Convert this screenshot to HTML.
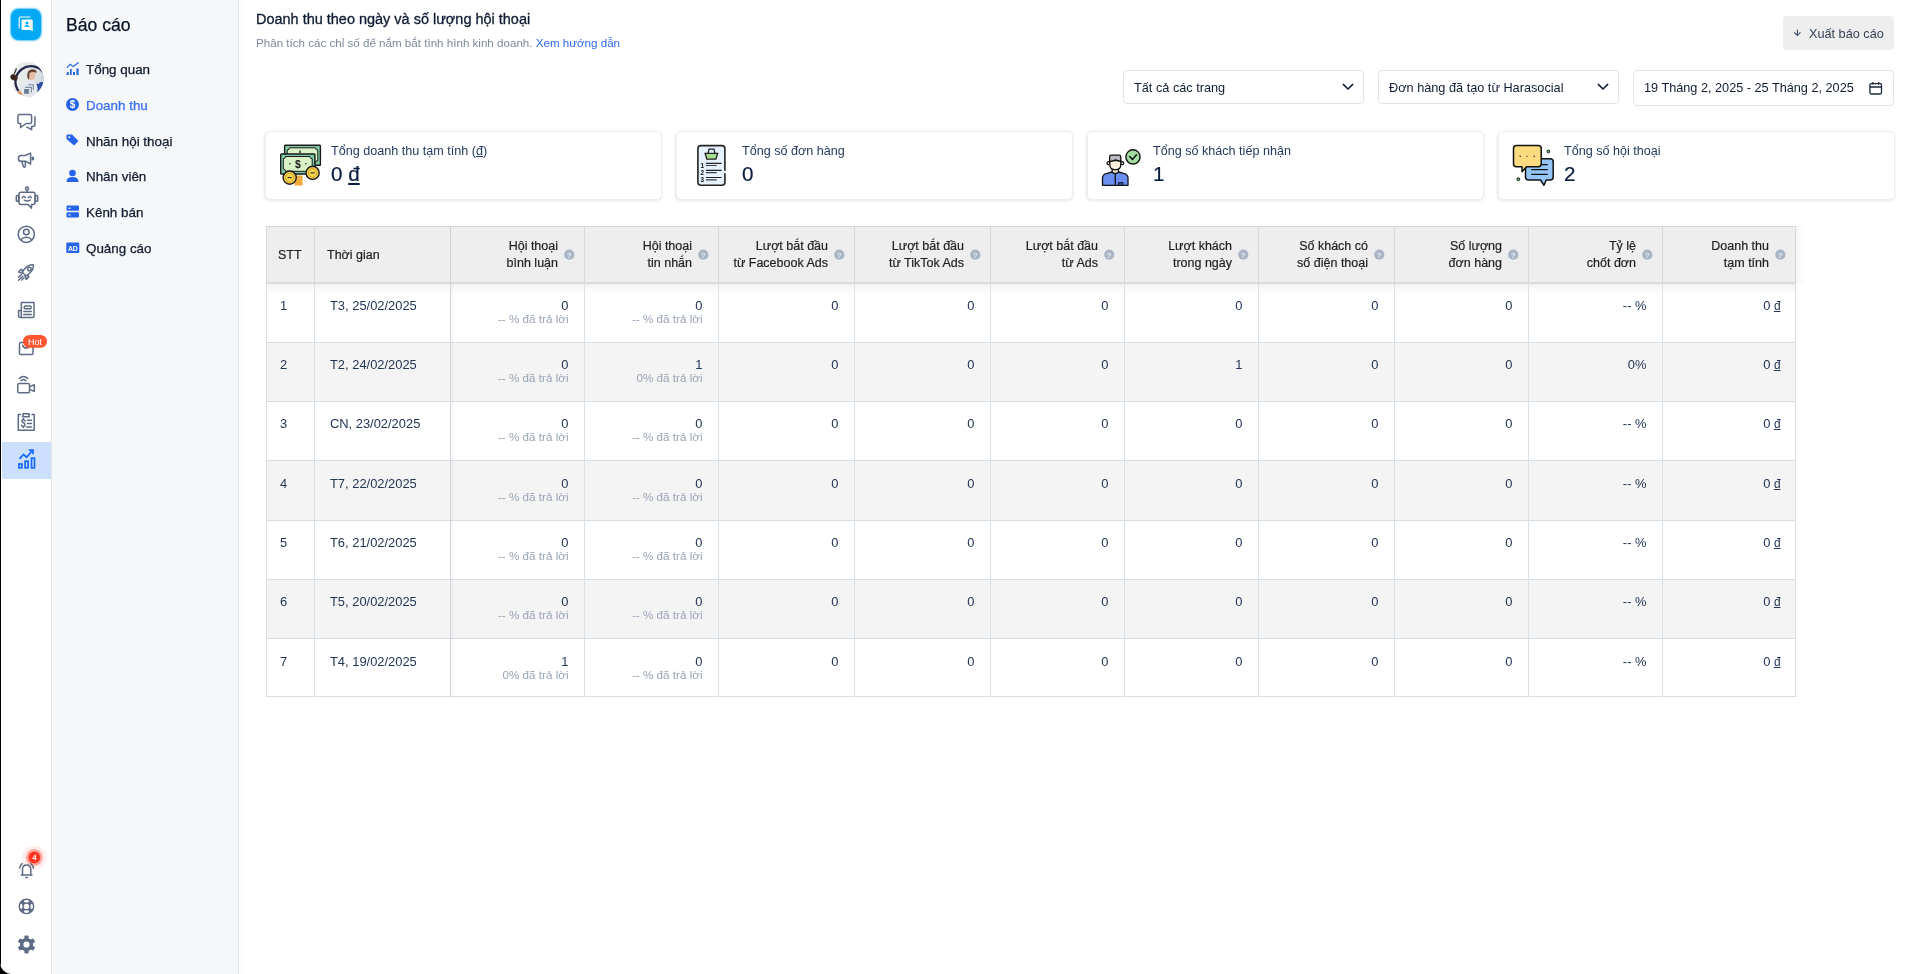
<!DOCTYPE html>
<html lang="vi">
<head>
<meta charset="utf-8">
<style>
*{box-sizing:border-box;margin:0;padding:0}
html,body{width:1920px;height:974px;overflow:hidden;background:#000;font-family:"Liberation Sans",sans-serif;color:#1e293b}
#iconbar{will-change:transform;position:absolute;left:0;top:0;width:52px;height:974px;background:#fff;border-right:1px solid #e3e7ec;border-bottom-left-radius:12px;overflow:hidden}
#sub{will-change:transform;position:absolute;left:52px;top:0;width:187px;height:974px;background:#f5f7f9;border-right:1px solid #e3e8ed}
#main{will-change:transform;position:absolute;left:239px;top:0;width:1681px;height:974px;background:#fff}
.abs{position:absolute}
.mi{font-size:13.4px;line-height:16px;white-space:nowrap;-webkit-text-stroke:0.25px currentColor}
.th{font-size:12.5px;line-height:17px;color:#1f1f1f;white-space:nowrap;-webkit-text-stroke:0.2px currentColor}
.td{font-size:12.9px;line-height:16px;color:#233554;white-space:nowrap}
.sub{font-size:11.68px;line-height:14px;color:#9aa4b5;white-space:nowrap}
.card{background:#fff;border:1px solid #eceef1;border-radius:5px;box-shadow:-0.5px 1px 2.5px rgba(20,40,80,0.10)}
.dong{font-size:0.92em;text-decoration:underline;text-decoration-thickness:1px;text-underline-offset:1px;margin-right:-1px}
.dong2{text-decoration:underline;text-decoration-thickness:1px;text-underline-offset:1px}
.md{-webkit-text-stroke:0.2px currentColor}
.dong3{text-decoration:underline;text-decoration-thickness:1.5px;text-underline-offset:2px}
</style>
</head>
<body>
<div id="iconbar"><div class="abs" style="left:0;top:0;width:1px;height:974px;background:#000"></div>
<div class="abs" style="left:11px;top:9px;width:30px;height:30.5px;border-radius:8px;background:#03a9f4;box-shadow:0 0 1.5px 0.5px rgba(3,169,244,0.6)"></div>
<svg class="abs" style="left:9px;top:8px" width="32" height="32" viewBox="0 0 32 32">
<path d="M10.2 20.5 V10.5 Q10.2 9 11.7 9 H21.4" fill="none" stroke="#fff" stroke-width="1.1"/>
<path d="M12.5 12.6 Q12.5 11.4 13.7 11.4 H22.5 Q23.7 11.4 23.7 12.6 V23.3 L21.5 21.9 H13.7 Q12.5 21.9 12.5 20.7 Z" fill="#fff"/>
<circle cx="18" cy="14.9" r="1.5" fill="#03a9f4"/>
<path d="M15.4 19 Q15.6 17 18 17 Q20.4 17 20.6 19 Z" fill="#03a9f4"/>
</svg>
<svg class="abs" style="left:9px;top:62px" width="36" height="36" viewBox="0 0 36 36">
<defs><clipPath id="av"><circle cx="17.6" cy="16.9" r="17"/></clipPath>
<filter id="avb" x="-10%" y="-10%" width="120%" height="120%"><feGaussianBlur stdDeviation="0.45"/></filter>
<linearGradient id="avg" x1="0" y1="0" x2="1" y2="0"><stop offset="0" stop-color="#eef2ef"/><stop offset="0.55" stop-color="#e4eae8"/><stop offset="1" stop-color="#cfd7da"/></linearGradient></defs>
<g clip-path="url(#av)"><g filter="url(#avb)">
<rect x="-2" y="-2" width="40" height="40" fill="url(#avg)"/>
<path d="M3 -2 V38" stroke="#f7f9f7" stroke-width="3"/>
<path d="M9.5 29 A13.3 13.3 0 0 1 34.5 10.5" fill="none" stroke="#27264f" stroke-width="2.2"/>
<path d="M34.5 10.5 Q36.5 15 35.5 21" fill="none" stroke="#27264f" stroke-width="2"/>
<path d="M7.5 6.5 L5 12.5" stroke="#3a2b28" stroke-width="1.2"/>
<ellipse cx="5" cy="15.5" rx="3.8" ry="2.9" fill="#3b2824" transform="rotate(30 5 15.5)"/>
<ellipse cx="22.6" cy="13.2" rx="4" ry="5" fill="#e6bea8"/>
<path d="M18.3 15.5 Q17.5 7.5 23 7.2 Q28.5 7.2 27.5 11 Q24 9 20.5 11 L20 18 Z" fill="#6b4634"/>
<path d="M26 21 Q30 19.5 37 20 V38 H28 Z" fill="#2e4ea6"/><path d="M24 20.5 Q27 19 31 19.6 L30 22 Q27 21.5 25.5 22.5 Z" fill="#d9dde8"/>

<path d="M6 38 L9 30 Q12 27 15 29 L14 38 Z" fill="#d8955e"/>
<path d="M15.5 19.5 Q18.5 18 20.5 20.5 L18 23.5 Z" fill="#ecc7b2"/>
</g></g>
<circle cx="20" cy="26.7" r="8.7" fill="#e5e9ee"/>
<rect x="15.1" y="27" width="4.8" height="4.8" fill="#6d7b93"/>
<path d="M16.2 25.4 H22.4 V30.5" fill="none" stroke="#7d8aa0" stroke-width="1.1"/>
<path d="M19 22.8 H24.3 V27.9" fill="none" stroke="#7d8aa0" stroke-width="1.1"/>
</svg>
<svg class="abs" style="left:14px;top:110px" width="24" height="24" viewBox="0 0 24 24" fill="none" stroke="#5d6b85" stroke-width="1.5" stroke-linecap="round" stroke-linejoin="round">
<path d="M3.9 6.2 Q3.9 4.6 5.5 4.6 H16 Q17.6 4.6 17.6 6.2 V11.9 Q17.6 13.5 16 13.5 H12.3 L6.6 17.3 V13.5 H5.5 Q3.9 13.5 3.9 11.9 Z" stroke-linejoin="miter" stroke-linecap="butt"/>
<path d="M20.9 6.2 V14.6 Q20.9 16.6 18.9 16.6 H17.6 V19.5 L12.3 16.8" stroke-linejoin="miter" stroke-linecap="butt"/>
</svg>
<svg class="abs" style="left:14px;top:148px" width="24" height="24" viewBox="0 0 24 24" fill="none" stroke="#5d6b85" stroke-width="1.5" stroke-linecap="round" stroke-linejoin="round">
<path d="M7.3 7.5 H11.3 L16.6 5.1 V16 L11.8 13.3 H7.3 A2.9 2.9 0 0 1 7.3 7.5 Z"/>
<path d="M7.8 13.6 L9.4 18.6 Q10.3 20 11.4 18.6 L11.3 13.6"/>
<path d="M18.3 9.3 A1.2 1.2 0 0 1 18.3 11.7 Z" fill="#5d6b85"/>
</svg>
<svg class="abs" style="left:10px;top:181px" width="32" height="32" viewBox="0 0 32 32" fill="none" stroke="#5d6b85" stroke-width="1.5" stroke-linecap="round" stroke-linejoin="round">
<path d="M11 11.3 H23 Q25 11.3 25 13.3 V21.5 Q25 23.5 23 23.5 H21.5 V27.2 L18 23.5 H11 Q9 23.5 9 21.5 V13.3 Q9 11.3 11 11.3 Z"/>
<circle cx="17" cy="7.4" r="1.5"/>
<path d="M17 9 V11.3"/>
<rect x="6.3" y="14.4" width="2.3" height="5.9" rx="0.9"/>
<rect x="25.4" y="14.4" width="2.3" height="5.9" rx="0.9"/>
<path d="M12.3 16.6 Q13.8 14.2 15.3 16.6"/>
<path d="M18.3 16.6 Q19.8 14.2 21.3 16.6"/>
<path d="M14.3 19.2 Q17.3 21 20.3 19.2"/>
</svg>
<svg class="abs" style="left:10px;top:218px" width="32" height="32" viewBox="0 0 32 32" fill="none" stroke="#5d6b85" stroke-width="1.5" stroke-linecap="round" stroke-linejoin="round">
<circle cx="16.3" cy="16.3" r="8.1"/>
<circle cx="16.3" cy="14" r="2.8"/>
<path d="M10.8 21.8 Q13 19.2 16.3 19.2 Q19.6 19.2 21.8 21.8"/>
</svg>
<svg class="abs" style="left:10px;top:256px" width="32" height="32" viewBox="0 0 32 32" fill="none" stroke="#5d6b85" stroke-width="1.5" stroke-linecap="round" stroke-linejoin="round">
<path d="M23.4 8.9 Q18.5 8.5 15 12.5 L12 16 L16.2 20.2 L19.6 17.2 Q23.8 13.6 23.4 8.9 Z"/>
<circle cx="19.4" cy="13" r="1.8"/>
<path d="M13.3 14.6 L11.2 13.4 L8.6 16 L12.3 17.1"/>
<path d="M17.6 18.8 L18.9 20.9 L16.3 23.5 L15.1 19.8"/>
<path d="M11.3 18.6 L8.5 21.2"/><path d="M12.7 20.2 L8.6 24.3"/><path d="M14 21.8 L11.8 24"/>
</svg>
<svg class="abs" style="left:10px;top:294px" width="32" height="32" viewBox="0 0 32 32" fill="none" stroke="#5d6b85" stroke-width="1.5" stroke-linecap="round" stroke-linejoin="round">
<path d="M11.3 23.6 V8.5 H24 V22 Q24 23.6 22.4 23.6 H10.3 Q8.6 23.6 8.6 22 V16.4 H11"/>
<rect x="14.2" y="11.9" width="6.9" height="2.8" rx="0.9"/>
<path d="M13.8 17.5 H21.3"/><path d="M13.8 20.4 H21.3"/>
</svg>
<svg class="abs" style="left:10px;top:330px" width="40" height="32" viewBox="0 0 40 32" fill="none" stroke="#5d6b85" stroke-width="1.5" stroke-linecap="round" stroke-linejoin="round">
<rect x="9.5" y="12.6" width="13.5" height="11.9" rx="1.3"/>
<path d="M12.7 15.2 Q13.5 18 16.3 18 Q19 18 19.8 15.2"/>
<rect x="13" y="5" width="24" height="12.8" rx="6.4" fill="#ff5530" stroke="none"/>
</svg>
<div class="abs" style="left:23px;top:336px;width:24px;height:13px;font-size:9px;line-height:13px;color:#fff;text-align:center">Hot</div>
<svg class="abs" style="left:10px;top:369px" width="32" height="32" viewBox="0 0 32 32" fill="none" stroke="#5d6b85" stroke-width="1.5" stroke-linecap="round" stroke-linejoin="round">
<rect x="7.8" y="14.5" width="11.7" height="9.3" rx="1.3"/>
<path d="M19.8 17.6 L24.3 15.8 V22.4 L19.8 20.6"/>
<path d="M9.3 9.4 Q13.5 5.5 17.7 9.4"/>
<path d="M11.1 11.6 Q13.5 9.3 15.9 11.6"/>
</svg>
<svg class="abs" style="left:10px;top:406px" width="32" height="32" viewBox="0 0 32 32" fill="none" stroke="#5d6b85" stroke-width="1.5" stroke-linecap="round" stroke-linejoin="round">
<path d="M10.4 8.6 H8.3 V24.3 H24.2 V8.6 H22"/>
<rect x="12.2" y="7.1" width="7.6" height="4.4" rx="0.6" fill="#5d6b85" stroke="none"/>
<rect x="13.7" y="8.6" width="4.6" height="1.5" rx="0.75" fill="#fff" stroke="none"/>
<path d="M15.1 15 Q14.6 13.7 13.3 13.7 Q11.9 13.7 11.9 15 Q11.9 16.3 13.3 16.8 Q15 17.4 15 18.9 Q15 20.4 13.3 20.4 Q11.9 20.4 11.5 19.2"/>
<path d="M13.3 12.6 V13.7"/><path d="M13.3 20.4 V21.6"/>
<path d="M17.5 14.3 H21.5"/><path d="M17.5 17.6 H21.5"/><path d="M16.6 21 H21.5"/>
</svg>
<div class="abs" style="left:2px;top:442px;width:49px;height:37px;background:#cce0fd"></div>
<svg class="abs" style="left:10px;top:444px" width="32" height="32" viewBox="0 0 32 32" fill="none" stroke="#1769ff" stroke-width="1.7" stroke-linecap="butt" stroke-linejoin="miter">
<rect x="8.9" y="20" width="3" height="3.8"/>
<rect x="15.1" y="17.2" width="3" height="6.6"/>
<rect x="21.5" y="14.2" width="3" height="9.6"/>
<path d="M9.5 14.8 L13.5 10.5 L16.6 13.2 L22.3 6.6"/>
<path d="M18.8 6.1 H23 V10.2"/>
</svg>
<svg class="abs" style="left:10px;top:846px" width="36" height="36" viewBox="0 0 36 36" fill="none" stroke="#5d6b85" stroke-width="1.5" stroke-linecap="round" stroke-linejoin="round">
<circle cx="24.3" cy="11.5" r="12" fill="#ffe9e6" stroke="none" opacity="0.8"/>
<circle cx="24.3" cy="11.5" r="8.4" fill="#ffaaa0" stroke="none"/>
<circle cx="24.3" cy="11.5" r="5.9" fill="#ff3522" stroke="none"/>
<path d="M12.5 28.9 V23.5 Q12.5 19 16.6 19 Q20.8 19 20.8 23.5 V28.9"/>
<path d="M11.3 28.9 H22"/>
<path d="M15.9 31.4 H17.3"/>
<path d="M9.6 22 Q10.2 19.2 12.2 17.6"/><path d="M23.5 22 Q22.9 19.2 20.9 17.6"/>
</svg>
<div class="abs" style="left:28px;top:851px;width:13px;height:13px;font-size:8px;font-weight:bold;line-height:13px;color:#fff;text-align:center">4</div>
<svg class="abs" style="left:16px;top:896px" width="21" height="21" viewBox="0 0 21 21">
<circle cx="10.45" cy="10.45" r="7.9" fill="#5d6b85"/>
<circle cx="10.45" cy="10.45" r="2.65" fill="#fff"/>
<g fill="#fff"><ellipse cx="10.45" cy="5.3" rx="2.6" ry="1.3"/><ellipse cx="10.45" cy="15.6" rx="2.6" ry="1.3"/><ellipse cx="5.25" cy="10.45" rx="1.25" ry="2.6"/><ellipse cx="15.65" cy="10.45" rx="1.25" ry="2.6"/></g></svg>
<svg class="abs" style="left:16px;top:933.5px" width="21" height="21" viewBox="0 0 21 21">
<g fill="#5d6b85"><rect x="8.4" y="1.6" width="4.2" height="5" rx="0.9" transform="rotate(0 10.5 10.5)"/><rect x="8.4" y="1.6" width="4.2" height="5" rx="0.9" transform="rotate(60 10.5 10.5)"/><rect x="8.4" y="1.6" width="4.2" height="5" rx="0.9" transform="rotate(120 10.5 10.5)"/><rect x="8.4" y="1.6" width="4.2" height="5" rx="0.9" transform="rotate(180 10.5 10.5)"/><rect x="8.4" y="1.6" width="4.2" height="5" rx="0.9" transform="rotate(240 10.5 10.5)"/><rect x="8.4" y="1.6" width="4.2" height="5" rx="0.9" transform="rotate(300 10.5 10.5)"/><circle cx="10.5" cy="10.5" r="6.6"/></g>
<circle cx="10.5" cy="10.5" r="3.1" fill="#fff"/>
</svg>
</div>
<div id="sub">
<div class="abs" style="left:14px;top:13px;font-size:17.6px;color:#0b1428;line-height:24px;white-space:nowrap;-webkit-text-stroke:0.25px currentColor">Báo cáo</div>
<svg class="abs" style="left:14px;top:62px" width="14" height="14" viewBox="0 0 14 14"><path d="M0.8 5.8 L4.2 2.2 L7.2 4.6 L12.6 0.6" fill="none" stroke="#2563eb" stroke-width="1.2"/><rect x="0.6" y="10.2" width="2.2" height="2.8" fill="#2563eb"/><rect x="4" y="7" width="1.7" height="6" fill="#2563eb"/><rect x="7" y="10" width="2" height="3" fill="#2563eb"/><rect x="10.4" y="6.5" width="2.2" height="6.5" fill="#2563eb"/></svg>
<div class="abs mi" style="left:34px;top:62px;color:#111a2e">Tổng quan</div>
<svg class="abs" style="left:14px;top:98px" width="14" height="14" viewBox="0 0 14 14"><circle cx="6.5" cy="6.5" r="6.5" fill="#2563eb"/><text x="6.5" y="10.2" font-size="10" font-weight="bold" text-anchor="middle" fill="#fff" font-family="Liberation Sans">$</text></svg>
<div class="abs mi" style="left:34px;top:98px;color:#3b6ef5">Doanh thu</div>
<svg class="abs" style="left:14px;top:134px" width="14" height="14" viewBox="0 0 14 14"><path d="M0.5 1.5 Q0.5 0.5 1.5 0.5 H6 L12.5 7 L8 11.5 L0.5 5 Z" fill="#2563eb"/><circle cx="3.3" cy="3.3" r="1" fill="#f5f7f9"/></svg>
<div class="abs mi" style="left:34px;top:134px;color:#111a2e">Nhãn hội thoại</div>
<svg class="abs" style="left:14px;top:169px" width="14" height="14" viewBox="0 0 14 14"><circle cx="6.5" cy="4" r="3.3" fill="#2563eb"/><path d="M0.5 13 Q0.5 8 6.5 8 Q12.5 8 12.5 13 Z" fill="#2563eb"/></svg>
<div class="abs mi" style="left:34px;top:169px;color:#111a2e">Nhân viên</div>
<svg class="abs" style="left:14px;top:205px" width="14" height="14" viewBox="0 0 14 14"><rect x="0.5" y="0.5" width="12.5" height="5.3" rx="1.2" fill="#2563eb"/><rect x="0.5" y="7.2" width="12.5" height="5.3" rx="1.2" fill="#2563eb"/><rect x="2.5" y="2.6" width="2" height="1.2" fill="#fff"/><rect x="2.5" y="9.3" width="2" height="1.2" fill="#fff"/></svg>
<div class="abs mi" style="left:34px;top:205px;color:#111a2e">Kênh bán</div>
<svg class="abs" style="left:14px;top:241px" width="14" height="14" viewBox="0 0 14 14"><rect x="0.3" y="1.5" width="13" height="10.5" rx="1.2" fill="#2563eb"/><text x="6.8" y="9.6" font-size="6.8" font-weight="bold" text-anchor="middle" fill="#fff" font-family="Liberation Sans">AD</text></svg>
<div class="abs mi" style="left:34px;top:241px;color:#111a2e">Quảng cáo</div>
</div>
<div id="main">
<div class="abs" style="left:0;top:0;width:7px;height:974px;background:linear-gradient(90deg,rgba(30,50,80,0.018),rgba(30,50,80,0))"></div>
<div class="abs" style="left:17px;top:10px;font-size:14.48px;line-height:18px;color:#0f1b33;-webkit-text-stroke:0.3px currentColor;white-space:nowrap">Doanh thu theo ngày và số lượng hội thoại</div>
<div class="abs" style="left:17px;top:36px;font-size:11.6px;line-height:14px;color:#7d889c;white-space:nowrap">Phân tích các chỉ số để nắm bắt tình hình kinh doanh. <span style="color:#2d68f5">Xem hướng dẫn</span></div>
<div class="abs" style="left:1544px;top:16px;width:111px;height:34px;background:#eeeeee;border-radius:4px"></div>
<svg class="abs" style="left:1554px;top:28px" width="9" height="10" viewBox="0 0 9 10"><path d="M4.4 2 V7.3 M1.4 4.6 L4.4 7.5 L7.1 4.6" fill="none" stroke="#3d4d70" stroke-width="1.1" stroke-linecap="round" stroke-linejoin="round"/></svg>
<div class="abs" style="left:1570px;top:27px;font-size:12.7px;line-height:14px;color:#334155;white-space:nowrap">Xuất báo cáo</div>
<div class="abs" style="left:884px;top:70px;width:241px;height:34px;border:1px solid #dfe4ea;border-radius:4px;background:#fff"></div>
<div class="abs" style="left:895px;top:80px;font-size:12.73px;line-height:15px;color:#111c33;white-space:nowrap">Tất cả các trang</div>
<svg class="abs" style="left:1102px;top:82px" width="14" height="10" viewBox="0 0 14 10"><path d="M2.3 2.4 L7 7 L11.7 2.4" fill="none" stroke="#0f1b33" stroke-width="1.5" stroke-linecap="round" stroke-linejoin="round"/></svg>
<div class="abs" style="left:1139px;top:70px;width:241px;height:34px;border:1px solid #dfe4ea;border-radius:4px;background:#fff"></div>
<div class="abs" style="left:1150px;top:80px;font-size:12.73px;line-height:15px;color:#111c33;white-space:nowrap">Đơn hàng đã tạo từ Harasocial</div>
<svg class="abs" style="left:1357px;top:82px" width="14" height="10" viewBox="0 0 14 10"><path d="M2.3 2.4 L7 7 L11.7 2.4" fill="none" stroke="#0f1b33" stroke-width="1.5" stroke-linecap="round" stroke-linejoin="round"/></svg>
<div class="abs" style="left:1394px;top:70px;width:261px;height:36px;border:1px solid #dfe4ea;border-radius:4px;background:#fff"></div>
<div class="abs" style="left:1405px;top:81px;font-size:12.7px;line-height:15px;color:#111c33;white-space:nowrap">19 Tháng 2, 2025 - 25 Tháng 2, 2025</div>
<svg class="abs" style="left:1629px;top:81px" width="15" height="15" viewBox="0 0 15 15"><rect x="1.9" y="2.6" width="11.6" height="10.4" rx="1.4" fill="none" stroke="#1e293b" stroke-width="1.3"/><path d="M1.9 6 H13.5 M4.8 1 V3.6 M10.6 1 V3.6" stroke="#1e293b" stroke-width="1.3"/></svg>
<div class="abs card" style="left:26px;top:131px;width:397px;height:69px"></div>
<div class="abs" style="left:92px;top:143.5px;font-size:12.6px;line-height:15px;color:#243a5e;white-space:nowrap">Tổng doanh thu tạm tính (<span class=dong2>đ</span>)</div>
<div class="abs" style="left:92px;top:161.5px;font-size:20.6px;line-height:24px;color:#0a1d40;-webkit-text-stroke:0.2px currentColor;white-space:nowrap">0 <span class=dong3>đ</span></div>
<div class="abs card" style="left:437px;top:131px;width:397px;height:69px"></div>
<div class="abs" style="left:503px;top:143.5px;font-size:12.6px;line-height:15px;color:#243a5e;white-space:nowrap">Tổng số đơn hàng</div>
<div class="abs" style="left:503px;top:161.5px;font-size:20.6px;line-height:24px;color:#0a1d40;-webkit-text-stroke:0.2px currentColor;white-space:nowrap">0</div>
<div class="abs card" style="left:848px;top:131px;width:397px;height:69px"></div>
<div class="abs" style="left:914px;top:143.5px;font-size:12.6px;line-height:15px;color:#243a5e;white-space:nowrap">Tổng số khách tiếp nhận</div>
<div class="abs" style="left:914px;top:161.5px;font-size:20.6px;line-height:24px;color:#0a1d40;-webkit-text-stroke:0.2px currentColor;white-space:nowrap">1</div>
<div class="abs card" style="left:1259px;top:131px;width:397px;height:69px"></div>
<div class="abs" style="left:1325px;top:143.5px;font-size:12.6px;line-height:15px;color:#243a5e;white-space:nowrap">Tổng số hội thoại</div>
<div class="abs" style="left:1325px;top:161.5px;font-size:20.6px;line-height:24px;color:#0a1d40;-webkit-text-stroke:0.2px currentColor;white-space:nowrap">2</div>
<svg class="abs" style="left:40px;top:144px" width="44" height="44" viewBox="0 0 44 44" stroke="#1a1a1a" stroke-width="1.4" stroke-linejoin="round">
<rect x="5.6" y="1.3" width="35.8" height="20" rx="0.8" fill="#7fc9a7"/>
<path d="M10.5 3.8 H36.5 Q36.5 6 38.8 6 V16.5 Q36.5 16.5 36.5 18.8 H10.5 Q10.5 16.5 8.2 16.5 V6 Q10.5 6 10.5 3.8 Z" fill="#d9f2c6" stroke-width="1"/>
<path d="M21 6.5 V9" stroke-width="1.3"/>
<rect x="1.7" y="10" width="34.2" height="20" rx="0.8" fill="#7fc9a7"/>
<path d="M6.6 12.5 H30.9 Q30.9 14.7 33.2 14.7 V25 Q30.9 25 30.9 27.3 H6.6 Q6.6 25 4.3 25 V14.7 Q6.6 14.7 6.6 12.5 Z" fill="#d9f2c6" stroke-width="1"/>
<text x="18.8" y="23.6" font-size="10.5" font-weight="bold" text-anchor="middle" fill="#1a1a1a" stroke="none" font-family="Liberation Sans">$</text>
<path d="M10 19.8 H11.6 M26 19.8 H27.6" stroke-width="1.1"/>
<rect x="15.5" y="38" width="8.2" height="3.4" rx="1" fill="#f0a93a" stroke="none"/>
<rect x="15.5" y="34.6" width="8.2" height="3.4" rx="1" fill="#f0a93a" stroke="none"/>
<rect x="15.5" y="31.6" width="8.2" height="3" rx="1" fill="#f0a93a" stroke="none"/>
<circle cx="10.7" cy="33.6" r="6.6" fill="#f7d452"/>
<circle cx="10.7" cy="33.6" r="4.3" fill="#f7d452" stroke="#c79a1e" stroke-width="0.9"/>
<path d="M8.6 33.6 H12.8" stroke-width="1"/>
<circle cx="33.6" cy="28.9" r="6.6" fill="#f7d452"/>
<circle cx="33.6" cy="28.9" r="4.3" fill="#f7d452" stroke="#c79a1e" stroke-width="0.9"/>
<path d="M31.5 28.9 H35.7" stroke-width="1"/>
</svg>
<svg class="abs" style="left:457px;top:144px" width="32" height="44" viewBox="0 0 32 44" stroke="#222" stroke-width="1.6">
<rect x="1.9" y="1.6" width="27" height="39.6" rx="3" fill="#e6f2fd"/>
<path d="M28.9 26.8 V29.2" stroke="#e6f2fd" stroke-width="2"/>
<path d="M10.9 15.2 L9.1 9.3 H21.7 L19.9 15.2 Z" fill="#a6e08f" stroke-width="1.3"/>
<path d="M12 9.3 L13 5.2 H18 L19 9.3" fill="none" stroke-width="1.3"/>
<path d="M9.9 19.4 H25.6 M9.9 26.3 H25.6 M9.9 33.5 H25.6" stroke-width="1.2"/>
<path d="M9.9 21.5 H20.7 M9.9 28.6 H20.7 M9.9 35.8 H20.7" stroke-width="1.2" stroke="#3b3f45"/>
<text x="6.4" y="23.6" font-size="6.4" font-weight="bold" text-anchor="middle" fill="#111" stroke="none" font-family="Liberation Sans">1</text>
<text x="6.4" y="30.7" font-size="6.4" font-weight="bold" text-anchor="middle" fill="#111" stroke="none" font-family="Liberation Sans">2</text>
<text x="6.4" y="37.8" font-size="6.4" font-weight="bold" text-anchor="middle" fill="#111" stroke="none" font-family="Liberation Sans">3</text>
</svg>
<svg class="abs" style="left:856px;top:140px" width="50" height="50" viewBox="0 0 50 50" stroke="#111" stroke-width="1.3" stroke-linejoin="round">
<path d="M7.5 45.3 V38 Q7.5 34.5 12 33.4 L17 32 L20.3 33.2 L23.6 32 L28.6 33.4 Q33 34.5 33 38 V45.3 Z" fill="#6a8ff0"/>
<path d="M20.3 33.5 V45.3"/>
<rect x="23.5" y="42.6" width="4.5" height="2.7" fill="#2f55b8" stroke-width="0.9"/>
<path d="M17.2 28.8 V32.6 Q20.3 34 23.4 32.6 V28.8" fill="#fbefdc"/>
<circle cx="13.5" cy="23.2" r="1.5" fill="#fbefdc"/><circle cx="27.2" cy="23.2" r="1.5" fill="#fbefdc"/>
<path d="M14.8 20.5 V24.5 Q14.8 29.8 20.3 29.8 Q25.8 29.8 25.8 24.5 V20.5 Z" fill="#fcf0df"/>
<path d="M14.6 21.5 V17 Q14.6 15.2 16.4 15.2 H24 Q25.8 15.2 25.8 17 V21.3 Q23 20.8 20.3 19.8 L19.3 20.3 Q17 21 14.6 21.5 Z" fill="#b8babf"/>
<circle cx="38" cy="16.9" r="7.1" fill="#a3dca0" stroke-width="1.4"/>
<path d="M34.6 16.5 L37.5 19.4 L41.5 14.8" fill="none" stroke-width="1.5" stroke-linecap="round"/>
</svg>
<svg class="abs" style="left:1271px;top:143px" width="46" height="46" viewBox="0 0 46 46" stroke="#111" stroke-width="1.5" stroke-linejoin="round">
<path d="M17.5 15.7 H40.2 Q43.2 15.7 43.2 18.7 V34 Q43.2 37 40.2 37 H36.2 L34 42.3 L30.5 37 H18.5 Q15.5 37 15.5 34 V17.7 Q15.5 15.7 17.5 15.7 Z" fill="#93c5f5"/>
<path d="M21.2 26.6 H37.8 M21.2 31.4 H37.8 M31.5 21.7 H37.8" stroke-width="1.2"/>
<path d="M6.5 2.5 H28.2 Q31.2 2.5 31.2 5.5 V20.7 Q31.2 23.7 28.2 23.7 H16.5 L12 28.8 V23.7 H6.5 Q3.5 23.7 3.5 20.7 V5.5 Q3.5 2.5 6.5 2.5 Z" fill="#fddb80"/>
<path d="M9.5 13.3 H11 M16.6 13.3 H17.6 M23.5 13.3 H25" stroke-width="1.1"/>
<circle cx="38.4" cy="8.4" r="1.4" fill="#7dc27a" stroke-width="1"/>
<circle cx="8.3" cy="36.2" r="1.4" fill="#7dc27a" stroke-width="1"/>
</svg>
<div class="abs" style="left:27px;top:226px;width:1530px;height:56px;background:#eeeeee"></div>
<div class="abs" style="left:27px;top:284px;width:1529px;height:58px;background:#ffffff"></div>
<div class="abs" style="left:27px;top:343px;width:1529px;height:58px;background:#f4f4f4"></div>
<div class="abs" style="left:27px;top:402px;width:1529px;height:58px;background:#ffffff"></div>
<div class="abs" style="left:27px;top:461px;width:1529px;height:59px;background:#f4f4f4"></div>
<div class="abs" style="left:27px;top:521px;width:1529px;height:58px;background:#ffffff"></div>
<div class="abs" style="left:27px;top:580px;width:1529px;height:58px;background:#f4f4f4"></div>
<div class="abs" style="left:27px;top:639px;width:1529px;height:57px;background:#ffffff"></div>
<div class="abs" style="left:27px;top:284px;width:1529px;height:10px;background:linear-gradient(#f3f3f3,rgba(255,255,255,0))"></div>
<div class="abs" style="left:1557px;top:226px;width:10px;height:57px;background:linear-gradient(90deg,rgba(0,0,0,0.04),rgba(0,0,0,0))"></div>
<div class="abs" style="left:27px;top:226px;width:1530px;height:1px;background:#d8d8d8"></div>
<div class="abs" style="left:27px;top:282px;width:1530px;height:1px;background:#d8d8d8"></div>
<div class="abs" style="left:27px;top:226px;width:1px;height:56px;background:#d8d8d8"></div>
<div class="abs" style="left:75px;top:226px;width:1px;height:56px;background:#d8d8d8"></div>
<div class="abs" style="left:211px;top:226px;width:1px;height:56px;background:#cfcfcf"></div>
<div class="abs" style="left:345px;top:226px;width:1px;height:56px;background:#d8d8d8"></div>
<div class="abs" style="left:479px;top:226px;width:1px;height:56px;background:#d8d8d8"></div>
<div class="abs" style="left:615px;top:226px;width:1px;height:56px;background:#d8d8d8"></div>
<div class="abs" style="left:751px;top:226px;width:1px;height:56px;background:#d8d8d8"></div>
<div class="abs" style="left:885px;top:226px;width:1px;height:56px;background:#d8d8d8"></div>
<div class="abs" style="left:1019px;top:226px;width:1px;height:56px;background:#d8d8d8"></div>
<div class="abs" style="left:1155px;top:226px;width:1px;height:56px;background:#d8d8d8"></div>
<div class="abs" style="left:1289px;top:226px;width:1px;height:56px;background:#d8d8d8"></div>
<div class="abs" style="left:1423px;top:226px;width:1px;height:56px;background:#d8d8d8"></div>
<div class="abs" style="left:1556px;top:226px;width:1px;height:56px;background:#d8d8d8"></div>
<div class="abs" style="left:27px;top:283px;width:1530px;height:1px;background:#d6dde3"></div>
<div class="abs" style="left:27px;top:342px;width:1530px;height:1px;background:#d6dde3"></div>
<div class="abs" style="left:27px;top:401px;width:1530px;height:1px;background:#d6dde3"></div>
<div class="abs" style="left:27px;top:460px;width:1530px;height:1px;background:#d6dde3"></div>
<div class="abs" style="left:27px;top:520px;width:1530px;height:1px;background:#d6dde3"></div>
<div class="abs" style="left:27px;top:579px;width:1530px;height:1px;background:#d6dde3"></div>
<div class="abs" style="left:27px;top:638px;width:1530px;height:1px;background:#d6dde3"></div>
<div class="abs" style="left:27px;top:696px;width:1530px;height:1px;background:#d6dde3"></div>
<div class="abs" style="left:27px;top:283px;width:1px;height:414px;background:#d9e0e6"></div>
<div class="abs" style="left:75px;top:283px;width:1px;height:414px;background:#d9e0e6"></div>
<div class="abs" style="left:211px;top:283px;width:1px;height:414px;background:#cfd5da"></div>
<div class="abs" style="left:345px;top:283px;width:1px;height:414px;background:#d9e0e6"></div>
<div class="abs" style="left:479px;top:283px;width:1px;height:414px;background:#d9e0e6"></div>
<div class="abs" style="left:615px;top:283px;width:1px;height:414px;background:#d9e0e6"></div>
<div class="abs" style="left:751px;top:283px;width:1px;height:414px;background:#d9e0e6"></div>
<div class="abs" style="left:885px;top:283px;width:1px;height:414px;background:#d9e0e6"></div>
<div class="abs" style="left:1019px;top:283px;width:1px;height:414px;background:#d9e0e6"></div>
<div class="abs" style="left:1155px;top:283px;width:1px;height:414px;background:#d9e0e6"></div>
<div class="abs" style="left:1289px;top:283px;width:1px;height:414px;background:#d9e0e6"></div>
<div class="abs" style="left:1423px;top:283px;width:1px;height:414px;background:#d9e0e6"></div>
<div class="abs" style="left:1556px;top:283px;width:1px;height:414px;background:#d9e0e6"></div>
<div class="abs" style="left:212px;top:283px;width:4px;height:413px;background:linear-gradient(90deg,rgba(0,0,0,0.03),rgba(0,0,0,0))"></div>
<div class="abs th" style="left:39px;top:247px">STT</div>
<div class="abs th" style="left:88px;top:247px">Thời gian</div>
<div class="abs th" style="left:119px;top:238px;width:200px;text-align:right">Hội thoại<br>bình luận</div>
<svg class="abs" style="left:324px;top:249px" width="12" height="12" viewBox="0 0 12 12"><circle cx="6.3" cy="5.7" r="5.1" fill="#a9b4c4"/><text x="6.3" y="8.8" font-size="8" font-weight="bold" text-anchor="middle" fill="#e9edf2" font-family="Liberation Sans">?</text></svg>
<div class="abs th" style="left:253px;top:238px;width:200px;text-align:right">Hội thoại<br>tin nhắn</div>
<svg class="abs" style="left:458px;top:249px" width="12" height="12" viewBox="0 0 12 12"><circle cx="6.3" cy="5.7" r="5.1" fill="#a9b4c4"/><text x="6.3" y="8.8" font-size="8" font-weight="bold" text-anchor="middle" fill="#e9edf2" font-family="Liberation Sans">?</text></svg>
<div class="abs th" style="left:389px;top:238px;width:200px;text-align:right">Lượt bắt đầu<br>từ Facebook Ads</div>
<svg class="abs" style="left:594px;top:249px" width="12" height="12" viewBox="0 0 12 12"><circle cx="6.3" cy="5.7" r="5.1" fill="#a9b4c4"/><text x="6.3" y="8.8" font-size="8" font-weight="bold" text-anchor="middle" fill="#e9edf2" font-family="Liberation Sans">?</text></svg>
<div class="abs th" style="left:525px;top:238px;width:200px;text-align:right">Lượt bắt đầu<br>từ TikTok Ads</div>
<svg class="abs" style="left:730px;top:249px" width="12" height="12" viewBox="0 0 12 12"><circle cx="6.3" cy="5.7" r="5.1" fill="#a9b4c4"/><text x="6.3" y="8.8" font-size="8" font-weight="bold" text-anchor="middle" fill="#e9edf2" font-family="Liberation Sans">?</text></svg>
<div class="abs th" style="left:659px;top:238px;width:200px;text-align:right">Lượt bắt đầu<br>từ Ads</div>
<svg class="abs" style="left:864px;top:249px" width="12" height="12" viewBox="0 0 12 12"><circle cx="6.3" cy="5.7" r="5.1" fill="#a9b4c4"/><text x="6.3" y="8.8" font-size="8" font-weight="bold" text-anchor="middle" fill="#e9edf2" font-family="Liberation Sans">?</text></svg>
<div class="abs th" style="left:793px;top:238px;width:200px;text-align:right">Lượt khách<br>trong ngày</div>
<svg class="abs" style="left:998px;top:249px" width="12" height="12" viewBox="0 0 12 12"><circle cx="6.3" cy="5.7" r="5.1" fill="#a9b4c4"/><text x="6.3" y="8.8" font-size="8" font-weight="bold" text-anchor="middle" fill="#e9edf2" font-family="Liberation Sans">?</text></svg>
<div class="abs th" style="left:929px;top:238px;width:200px;text-align:right">Số khách có<br>số điện thoại</div>
<svg class="abs" style="left:1134px;top:249px" width="12" height="12" viewBox="0 0 12 12"><circle cx="6.3" cy="5.7" r="5.1" fill="#a9b4c4"/><text x="6.3" y="8.8" font-size="8" font-weight="bold" text-anchor="middle" fill="#e9edf2" font-family="Liberation Sans">?</text></svg>
<div class="abs th" style="left:1063px;top:238px;width:200px;text-align:right">Số lượng<br>đơn hàng</div>
<svg class="abs" style="left:1268px;top:249px" width="12" height="12" viewBox="0 0 12 12"><circle cx="6.3" cy="5.7" r="5.1" fill="#a9b4c4"/><text x="6.3" y="8.8" font-size="8" font-weight="bold" text-anchor="middle" fill="#e9edf2" font-family="Liberation Sans">?</text></svg>
<div class="abs th" style="left:1197px;top:238px;width:200px;text-align:right">Tỷ lệ<br>chốt đơn</div>
<svg class="abs" style="left:1402px;top:249px" width="12" height="12" viewBox="0 0 12 12"><circle cx="6.3" cy="5.7" r="5.1" fill="#a9b4c4"/><text x="6.3" y="8.8" font-size="8" font-weight="bold" text-anchor="middle" fill="#e9edf2" font-family="Liberation Sans">?</text></svg>
<div class="abs th" style="left:1330px;top:238px;width:200px;text-align:right">Doanh thu<br>tạm tính</div>
<svg class="abs" style="left:1535px;top:249px" width="12" height="12" viewBox="0 0 12 12"><circle cx="6.3" cy="5.7" r="5.1" fill="#a9b4c4"/><text x="6.3" y="8.8" font-size="8" font-weight="bold" text-anchor="middle" fill="#e9edf2" font-family="Liberation Sans">?</text></svg>
<div class="abs td" style="left:41px;top:298px">1</div>
<div class="abs td" style="left:91px;top:298px">T3, 25/02/2025</div>
<div class="abs td" style="left:129.5px;top:298px;width:200px;text-align:right">0</div>
<div class="abs sub" style="left:129.5px;top:312px;width:200px;text-align:right">-- % đã trả lời</div>
<div class="abs td" style="left:263.5px;top:298px;width:200px;text-align:right">0</div>
<div class="abs sub" style="left:263.5px;top:312px;width:200px;text-align:right">-- % đã trả lời</div>
<div class="abs td" style="left:399.5px;top:298px;width:200px;text-align:right">0</div>
<div class="abs td" style="left:535.5px;top:298px;width:200px;text-align:right">0</div>
<div class="abs td" style="left:669.5px;top:298px;width:200px;text-align:right">0</div>
<div class="abs td" style="left:803.5px;top:298px;width:200px;text-align:right">0</div>
<div class="abs td" style="left:939.5px;top:298px;width:200px;text-align:right">0</div>
<div class="abs td" style="left:1073.5px;top:298px;width:200px;text-align:right">0</div>
<div class="abs td" style="left:1207.5px;top:298px;width:200px;text-align:right">-- %</div>
<div class="abs td" style="left:1340.5px;top:298px;width:200px;text-align:right">0 <span class=dong>đ</span></div>
<div class="abs td" style="left:41px;top:357px">2</div>
<div class="abs td" style="left:91px;top:357px">T2, 24/02/2025</div>
<div class="abs td" style="left:129.5px;top:357px;width:200px;text-align:right">0</div>
<div class="abs sub" style="left:129.5px;top:371px;width:200px;text-align:right">-- % đã trả lời</div>
<div class="abs td" style="left:263.5px;top:357px;width:200px;text-align:right">1</div>
<div class="abs sub" style="left:263.5px;top:371px;width:200px;text-align:right">0% đã trả lời</div>
<div class="abs td" style="left:399.5px;top:357px;width:200px;text-align:right">0</div>
<div class="abs td" style="left:535.5px;top:357px;width:200px;text-align:right">0</div>
<div class="abs td" style="left:669.5px;top:357px;width:200px;text-align:right">0</div>
<div class="abs td" style="left:803.5px;top:357px;width:200px;text-align:right">1</div>
<div class="abs td" style="left:939.5px;top:357px;width:200px;text-align:right">0</div>
<div class="abs td" style="left:1073.5px;top:357px;width:200px;text-align:right">0</div>
<div class="abs td" style="left:1207.5px;top:357px;width:200px;text-align:right">0%</div>
<div class="abs td" style="left:1340.5px;top:357px;width:200px;text-align:right">0 <span class=dong>đ</span></div>
<div class="abs td" style="left:41px;top:416px">3</div>
<div class="abs td" style="left:91px;top:416px">CN, 23/02/2025</div>
<div class="abs td" style="left:129.5px;top:416px;width:200px;text-align:right">0</div>
<div class="abs sub" style="left:129.5px;top:430px;width:200px;text-align:right">-- % đã trả lời</div>
<div class="abs td" style="left:263.5px;top:416px;width:200px;text-align:right">0</div>
<div class="abs sub" style="left:263.5px;top:430px;width:200px;text-align:right">-- % đã trả lời</div>
<div class="abs td" style="left:399.5px;top:416px;width:200px;text-align:right">0</div>
<div class="abs td" style="left:535.5px;top:416px;width:200px;text-align:right">0</div>
<div class="abs td" style="left:669.5px;top:416px;width:200px;text-align:right">0</div>
<div class="abs td" style="left:803.5px;top:416px;width:200px;text-align:right">0</div>
<div class="abs td" style="left:939.5px;top:416px;width:200px;text-align:right">0</div>
<div class="abs td" style="left:1073.5px;top:416px;width:200px;text-align:right">0</div>
<div class="abs td" style="left:1207.5px;top:416px;width:200px;text-align:right">-- %</div>
<div class="abs td" style="left:1340.5px;top:416px;width:200px;text-align:right">0 <span class=dong>đ</span></div>
<div class="abs td" style="left:41px;top:476px">4</div>
<div class="abs td" style="left:91px;top:476px">T7, 22/02/2025</div>
<div class="abs td" style="left:129.5px;top:476px;width:200px;text-align:right">0</div>
<div class="abs sub" style="left:129.5px;top:490px;width:200px;text-align:right">-- % đã trả lời</div>
<div class="abs td" style="left:263.5px;top:476px;width:200px;text-align:right">0</div>
<div class="abs sub" style="left:263.5px;top:490px;width:200px;text-align:right">-- % đã trả lời</div>
<div class="abs td" style="left:399.5px;top:476px;width:200px;text-align:right">0</div>
<div class="abs td" style="left:535.5px;top:476px;width:200px;text-align:right">0</div>
<div class="abs td" style="left:669.5px;top:476px;width:200px;text-align:right">0</div>
<div class="abs td" style="left:803.5px;top:476px;width:200px;text-align:right">0</div>
<div class="abs td" style="left:939.5px;top:476px;width:200px;text-align:right">0</div>
<div class="abs td" style="left:1073.5px;top:476px;width:200px;text-align:right">0</div>
<div class="abs td" style="left:1207.5px;top:476px;width:200px;text-align:right">-- %</div>
<div class="abs td" style="left:1340.5px;top:476px;width:200px;text-align:right">0 <span class=dong>đ</span></div>
<div class="abs td" style="left:41px;top:535px">5</div>
<div class="abs td" style="left:91px;top:535px">T6, 21/02/2025</div>
<div class="abs td" style="left:129.5px;top:535px;width:200px;text-align:right">0</div>
<div class="abs sub" style="left:129.5px;top:549px;width:200px;text-align:right">-- % đã trả lời</div>
<div class="abs td" style="left:263.5px;top:535px;width:200px;text-align:right">0</div>
<div class="abs sub" style="left:263.5px;top:549px;width:200px;text-align:right">-- % đã trả lời</div>
<div class="abs td" style="left:399.5px;top:535px;width:200px;text-align:right">0</div>
<div class="abs td" style="left:535.5px;top:535px;width:200px;text-align:right">0</div>
<div class="abs td" style="left:669.5px;top:535px;width:200px;text-align:right">0</div>
<div class="abs td" style="left:803.5px;top:535px;width:200px;text-align:right">0</div>
<div class="abs td" style="left:939.5px;top:535px;width:200px;text-align:right">0</div>
<div class="abs td" style="left:1073.5px;top:535px;width:200px;text-align:right">0</div>
<div class="abs td" style="left:1207.5px;top:535px;width:200px;text-align:right">-- %</div>
<div class="abs td" style="left:1340.5px;top:535px;width:200px;text-align:right">0 <span class=dong>đ</span></div>
<div class="abs td" style="left:41px;top:594px">6</div>
<div class="abs td" style="left:91px;top:594px">T5, 20/02/2025</div>
<div class="abs td" style="left:129.5px;top:594px;width:200px;text-align:right">0</div>
<div class="abs sub" style="left:129.5px;top:608px;width:200px;text-align:right">-- % đã trả lời</div>
<div class="abs td" style="left:263.5px;top:594px;width:200px;text-align:right">0</div>
<div class="abs sub" style="left:263.5px;top:608px;width:200px;text-align:right">-- % đã trả lời</div>
<div class="abs td" style="left:399.5px;top:594px;width:200px;text-align:right">0</div>
<div class="abs td" style="left:535.5px;top:594px;width:200px;text-align:right">0</div>
<div class="abs td" style="left:669.5px;top:594px;width:200px;text-align:right">0</div>
<div class="abs td" style="left:803.5px;top:594px;width:200px;text-align:right">0</div>
<div class="abs td" style="left:939.5px;top:594px;width:200px;text-align:right">0</div>
<div class="abs td" style="left:1073.5px;top:594px;width:200px;text-align:right">0</div>
<div class="abs td" style="left:1207.5px;top:594px;width:200px;text-align:right">-- %</div>
<div class="abs td" style="left:1340.5px;top:594px;width:200px;text-align:right">0 <span class=dong>đ</span></div>
<div class="abs td" style="left:41px;top:654px">7</div>
<div class="abs td" style="left:91px;top:654px">T4, 19/02/2025</div>
<div class="abs td" style="left:129.5px;top:654px;width:200px;text-align:right">1</div>
<div class="abs sub" style="left:129.5px;top:668px;width:200px;text-align:right">0% đã trả lời</div>
<div class="abs td" style="left:263.5px;top:654px;width:200px;text-align:right">0</div>
<div class="abs sub" style="left:263.5px;top:668px;width:200px;text-align:right">-- % đã trả lời</div>
<div class="abs td" style="left:399.5px;top:654px;width:200px;text-align:right">0</div>
<div class="abs td" style="left:535.5px;top:654px;width:200px;text-align:right">0</div>
<div class="abs td" style="left:669.5px;top:654px;width:200px;text-align:right">0</div>
<div class="abs td" style="left:803.5px;top:654px;width:200px;text-align:right">0</div>
<div class="abs td" style="left:939.5px;top:654px;width:200px;text-align:right">0</div>
<div class="abs td" style="left:1073.5px;top:654px;width:200px;text-align:right">0</div>
<div class="abs td" style="left:1207.5px;top:654px;width:200px;text-align:right">-- %</div>
<div class="abs td" style="left:1340.5px;top:654px;width:200px;text-align:right">0 <span class=dong>đ</span></div>
</div>
</body>
</html>
